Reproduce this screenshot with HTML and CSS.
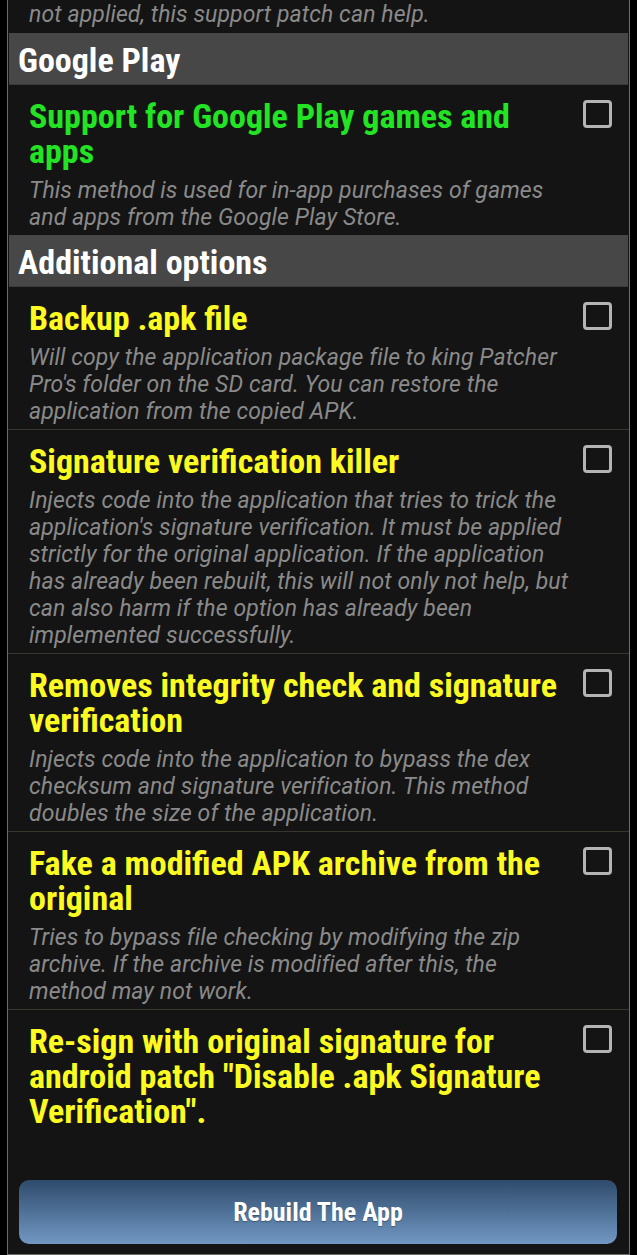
FILE: index.html
```html
<!DOCTYPE html>
<html lang="en">
<head>
  <meta charset="UTF-8">
  <meta name="viewport" content="width=device-width, initial-scale=1">
  <title>Patch options</title>
  <link rel="stylesheet" href="styles.css">
</head>
<body>
  <div class="panel">
    <p class="desc top-desc">not applied, this support patch can help.</p>

    <div class="section">Google Play</div>
    <div class="option">
      <div class="text">
        <div class="title green">Support for Google Play games and apps</div>
        <p class="desc">This method is used for in-app purchases of games and apps from the Google Play Store.</p>
      </div>
      <span class="check"></span>
    </div>

    <div class="section">Additional options</div>
    <div class="option">
      <div class="text">
        <div class="title">Backup .apk file</div>
        <p class="desc">Will copy the application package file to king Patcher Pro's folder on the SD card. You can restore the application from the copied APK.</p>
      </div>
      <span class="check"></span>
    </div>
    <div class="option">
      <div class="text">
        <div class="title">Signature verification killer</div>
        <p class="desc">Injects code into the application that tries to trick the application's signature verification. It must be applied strictly for the original application. If the application has already been rebuilt, this will not only not help, but can also harm if the option has already been implemented successfully.</p>
      </div>
      <span class="check"></span>
    </div>
    <div class="option">
      <div class="text">
        <div class="title">Removes integrity check and signature verification</div>
        <p class="desc">Injects code into the application to bypass the dex checksum and signature verification. This method doubles the size of the application.</p>
      </div>
      <span class="check"></span>
    </div>
    <div class="option">
      <div class="text">
        <div class="title">Fake a modified APK archive from the original</div>
        <p class="desc">Tries to bypass file checking by modifying the zip archive. If the archive is modified after this, the method may not work.</p>
      </div>
      <span class="check"></span>
    </div>
    <div class="option last">
      <div class="text">
        <div class="title">Re-sign with original signature for android patch "Disable .apk Signature Verification".</div>
      </div>
      <span class="check"></span>
    </div>

    <div class="footer">
      <button class="rebuild">Rebuild The App</button>
    </div>
  </div>
</body>
</html>
```
FILE: styles.css
```css
body {
  margin: 0;
  background: #000;
  font-family: Roboto, "Noto Sans", sans-serif;
  height: 1255px;
  overflow: hidden;
}
.panel {
  margin-left: 7px;
  width: 621px;
  background: #141414;
  border: 1px solid #6e6c66;
  border-top: none;
}
.desc {
  margin: 8px 0 0;
  font-style: italic;
  font-size: 23px;
  letter-spacing: 0.1px;
  line-height: 27px;
  color: #8a8a8a;
}
.top-desc {
  margin: 0;
  padding: 1px 21px 3px;
}
.section {
  margin: 2px 1px 0;
  height: 52px;
  line-height: 54px;
  padding-left: 9px;
  background: #474747;
  border-bottom: 1px solid #3a3a3a;
  box-sizing: border-box;
  color: #fff;
  font-weight: bold;
  font-stretch: condensed;
  font-size: 34px;
}
.option + .section {
  margin-top: 0;
}
.option {
  display: flex;
  align-items: flex-start;
  padding: 14px 17px 4px 21px;
}
.option + .option {
  border-top: 1px solid #37352d;
}
.text {
  flex: 1;
  padding-right: 10px;
}
.title {
  color: #fbfb22;
  font-weight: bold;
  font-stretch: condensed;
  font-size: 34px;
  line-height: 35px;
}
.title.green {
  color: #22e424;
}
.check {
  flex: none;
  width: 29px;
  height: 28px;
  margin-top: 1px;
  box-sizing: border-box;
  border: 3px solid #b4b4b4;
  border-radius: 4px;
}
.footer {
  padding: 47px 11px 10px 11px;
}
.rebuild {
  display: block;
  width: 598px;
  height: 64px;
  border: none;
  border-radius: 10px;
  background: linear-gradient(to bottom, #2f4b6c, #7198c3);
  color: #fff;
  font-family: Roboto, sans-serif;
  font-weight: bold;
  font-stretch: condensed;
  font-size: 26px;
  text-shadow: 0 1px 1px rgba(0,0,0,0.3);
}
```
